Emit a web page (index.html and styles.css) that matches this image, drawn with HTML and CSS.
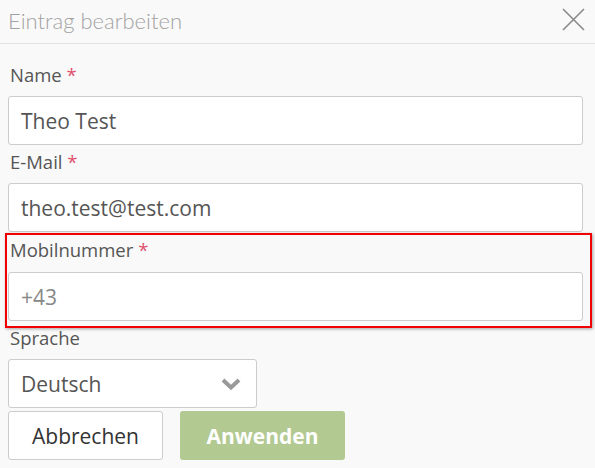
FILE: index.html
```html
<!DOCTYPE html>
<html lang="de">
<head>
<meta charset="utf-8">
<title>Eintrag bearbeiten</title>
<link rel="stylesheet" href="styles.css">
</head>
<body>
<div class="dialog">
  <div class="header">
    <div class="title">Eintrag bearbeiten</div>
    <svg class="close" width="23" height="23" viewBox="0 0 23 23"><path d="M1 1L22 22M22 1L1 22" stroke="#8a8a8a" stroke-width="1.6" fill="none"/></svg>
  </div>
  <div class="body">
    <div class="group">
      <div class="label">Name <span class="req">*</span></div>
      <div class="input">Theo Test</div>
    </div>
    <div class="group">
      <div class="label">E-Mail <span class="req">*</span></div>
      <div class="input">theo.test@test.com</div>
    </div>
    <div class="group highlighted">
      <div class="label label-mobile">Mobilnummer <span class="req">*</span></div>
      <div class="input placeholder">+43</div>
    </div>
    <div class="group">
      <div class="label label-lang">Sprache</div>
      <div class="input select">
        <span>Deutsch</span>
        <svg class="chev" width="20" height="12" viewBox="0 0 20 12"><path d="M2 2L10 9.5L18 2" stroke="#9a9a9a" stroke-width="4" fill="none" stroke-linecap="butt" stroke-linejoin="miter"/></svg>
      </div>
    </div>
    <div class="buttons">
      <div class="btn cancel">Abbrechen</div>
      <div class="btn apply">Anwenden</div>
    </div>
  </div>
</div>
</body>
</html>
```
FILE: styles.css
```css
html, body {
  margin: 0;
  padding: 0;
  background: #f9f9f9;
}
body {
  font-family: "Open Sans", "DejaVu Sans", sans-serif;
  width: 595px;
  height: 468px;
  overflow: hidden;
}
.header {
  height: 43px;
  border-bottom: 1px solid #e2e2e2;
  display: flex;
  align-items: center;
  justify-content: space-between;
  padding: 0 10px 0 8px;
}
.title {
  font-family: "Lato", "Open Sans", sans-serif;
  font-size: 22px;
  font-weight: 300;
  color: #a2a2a2;
  margin-top: -2px;
}
.close {
  display: block;
  margin-top: -4px;
}
.body {
  padding: 14px 12px 0 8px;
}
.group {
  position: relative;
}
.label {
  font-size: 18.5px;
  line-height: 24px;
  color: #555;
  padding: 5px 0 9px 2px;
}
.label-mobile {
  padding-top: 6px;
  padding-bottom: 10px;
}
.req {
  color: #e0506e;
}
.input {
  height: 47px;
  border: 1px solid #cccccc;
  border-radius: 3px;
  background: #fff;
  box-sizing: content-box;
  font-size: 21px;
  color: #555;
  display: flex;
  align-items: center;
  padding: 0 12px;
}
.placeholder {
  color: #888;
}
.highlighted::after {
  content: "";
  position: absolute;
  left: -3px;
  right: -9px;
  top: 1px;
  bottom: -7px;
  border: 2px solid #f00000;
  box-shadow: 1px 1px 3px rgba(0,0,0,0.35);
  pointer-events: none;
}
.select {
  width: 220px;
  justify-content: space-between;
  padding-right: 15px;
}
.chev {
  display: block;
}
.buttons {
  display: flex;
  gap: 17px;
  margin-top: 3px;
}
.btn {
  height: 49px;
  box-sizing: border-box;
  border-radius: 3px;
  display: flex;
  align-items: center;
  justify-content: center;
  font-size: 21px;
}
.cancel {
  width: 155px;
  border: 1px solid #cccccc;
  background: #fff;
  color: #333;
}
.apply {
  width: 165px;
  background: #b2c992;
  color: #fff;
  font-weight: 700;
}
```
